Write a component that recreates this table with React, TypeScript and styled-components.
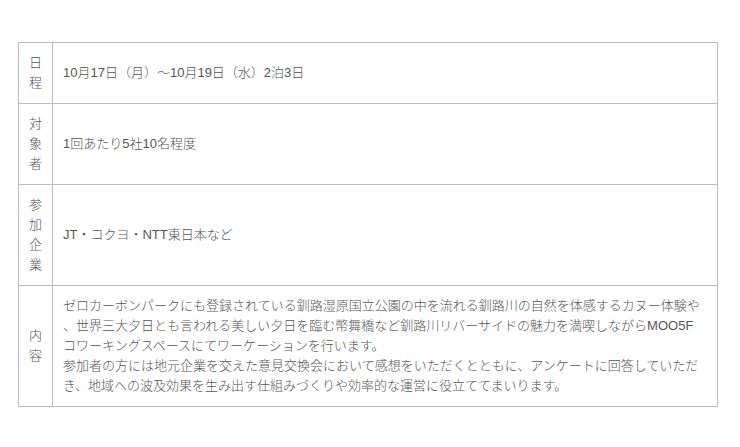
import React from "react";
import styled, { createGlobalStyle } from "styled-components";

const Global = createGlobalStyle`
  html, body { margin: 0; padding: 0; background: #ffffff; }
  body {
    font-family: "Liberation Sans", "Noto Sans CJK JP", sans-serif;
    color: #555555;
  }
`;

const Page = styled.div`
  padding: 42px 0 0 18px;
`;

const Table = styled.table`
  width: 700px;
  border-collapse: collapse;
  font-size: 13px;
  line-height: 20px;
`;

const Label = styled.th`
  width: 13px;
  padding: 10px;
  border: 1px solid #bbbbbb;
  font-weight: 300;
  text-align: center;
  vertical-align: middle;
  color: #555555;
`;

const Cell = styled.td`
  padding: 10px;
  border: 1px solid #bbbbbb;
  font-weight: 300;
  text-align: left;
  vertical-align: middle;
  color: #555555;
`;

const Char = styled.span`
  display: block;
`;

const rows: { label: string; content: React.ReactNode }[] = [
  { label: "日程", content: "10月17日（月）〜10月19日（水）2泊3日" },
  { label: "対象者", content: "1回あたり5社10名程度" },
  { label: "参加企業", content: "JT・コクヨ・NTT東日本など" },
  {
    label: "内容",
    content: (
      <>
        ゼロカーボンパークにも登録されている釧路湿原国立公園の中を流れる釧路川の自然を体感するカヌー体験や
        <br />
        、世界三大夕日とも言われる美しい夕日を臨む幣舞橋など釧路川リバーサイドの魅力を満喫しながらMOO5F
        <br />
        コワーキングスペースにてワーケーションを行います。
        <br />
        参加者の方には地元企業を交えた意見交換会において感想をいただくとともに、アンケートに回答していただき、地域への波及効果を生み出す仕組みづくりや効率的な運営に役立ててまいります。
      </>
    ),
  },
];

export default function App() {
  return (
    <Page>
      <Global />
      <Table>
        <tbody>
          {rows.map((r) => (
            <tr key={r.label}>
              <Label>
                {Array.from(r.label).map((c, i) => (
                  <Char key={i}>{c}</Char>
                ))}
              </Label>
              <Cell>{r.content}</Cell>
            </tr>
          ))}
        </tbody>
      </Table>
    </Page>
  );
}
